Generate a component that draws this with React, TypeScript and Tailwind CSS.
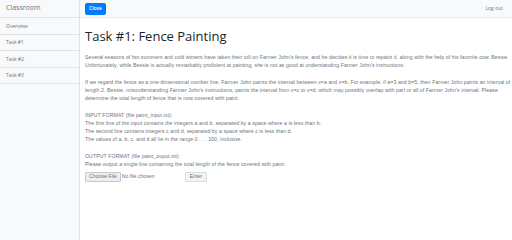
import React from "react";

const tasks = ["Overview", "Task #1", "Task #2", "Task #3"];

export default function App() {
  return (
    <div className="flex h-[240px] w-[512px] overflow-hidden bg-white text-[#212529]" style={{ fontFamily: '"Open Sans", "Liberation Sans", sans-serif' }}>
      <aside className="flex w-[80px] shrink-0 flex-col border-r border-[#dee2e6] bg-[#f8f9fa]">
        <div className="flex h-[18px] items-center border-b border-[#dee2e6] pl-[6px] text-[7px] text-[#6c757d]">Classroom</div>
        {tasks.map((t) => (
          <div key={t} className="flex h-[16.5px] items-center border-b border-[#dee2e6] pl-[6px] pt-[1px] text-[5px] text-[#6c757d]">
            {t}
          </div>
        ))}
      </aside>

      <div className="flex min-w-0 flex-1 flex-col">
        <header className="flex h-[18px] items-center justify-between border-b border-[#e9ecef] bg-[#f8f9fa] pl-[5px] pr-[9px]">
          <button className="h-[12px] rounded-[2px] bg-[#007bff] px-[4px] text-[5px] font-semibold text-white">Close</button>
          <span className="text-[5px] text-[#6c757d]">Log out</span>
        </header>

        <main className="px-[5px] pt-[10px]">
          <h1 className="text-[13px] leading-[16px] font-normal text-[#212529]">Task #1: Fence Painting</h1>

          <div className="mt-[9px] text-[5.2px] tracking-[0.07px] leading-[8px] text-[#6c757d] whitespace-nowrap" style={{ fontFamily: '"Liberation Sans", Arial, sans-serif' }}>
            <p>
              Several seasons of hot summers and cold winters have taken their toll on Farmer John's fence, and he decides it is time to repaint it, along with the help of his favorite cow, Bessie.
              <br />
              Unfortunately, while Bessie is actually remarkably proficient at painting, she is not as good at understanding Farmer John's instructions.
            </p>
            <p className="mt-[9px]">
              If we regard the fence as a one-dimensional number line, Farmer John paints the interval between x=a and x=b. For example, if a=3 and b=5, then Farmer John paints an interval of
              <br />
              length 2. Bessie, misunderstanding Farmer John's instructions, paints the interval from x=c to x=d, which may possibly overlap with part or all of Farmer John's interval. Please
              <br />
              determine the total length of fence that is now covered with paint.
            </p>
            <p className="mt-[9px]">
              INPUT FORMAT (file paint_input.txt):
              <br />
              The first line of the input contains the integers a and b, separated by a space where a is less than b.
              <br />
              The second line contains integers c and d, separated by a space where c is less than d.
              <br />
              The values of a, b, c, and d all lie in the range 0 . . . 100, inclusive.
            </p>
            <p className="mt-[9px]">
              OUTPUT FORMAT (file paint_ouput.txt):
              <br />
              Please output a single line containing the total length of the fence covered with paint.
            </p>
          </div>

          <div className="mt-[4px] flex items-center text-[5.2px] text-[#6c757d]" style={{ fontFamily: '"Liberation Sans", Arial, sans-serif' }}>
            <span className="flex h-[10px] items-center rounded-[1px] border border-[#c8c8c8] bg-[#efefef] px-[3px]">Choose File</span>
            <span className="ml-[1px] w-[63px]">No file chosen</span>
            <span className="flex h-[10px] items-center rounded-[1px] border border-[#dcdcdc] bg-[#f3f3f3] px-[4px]">Enter</span>
          </div>
        </main>
      </div>
    </div>
  );
}
